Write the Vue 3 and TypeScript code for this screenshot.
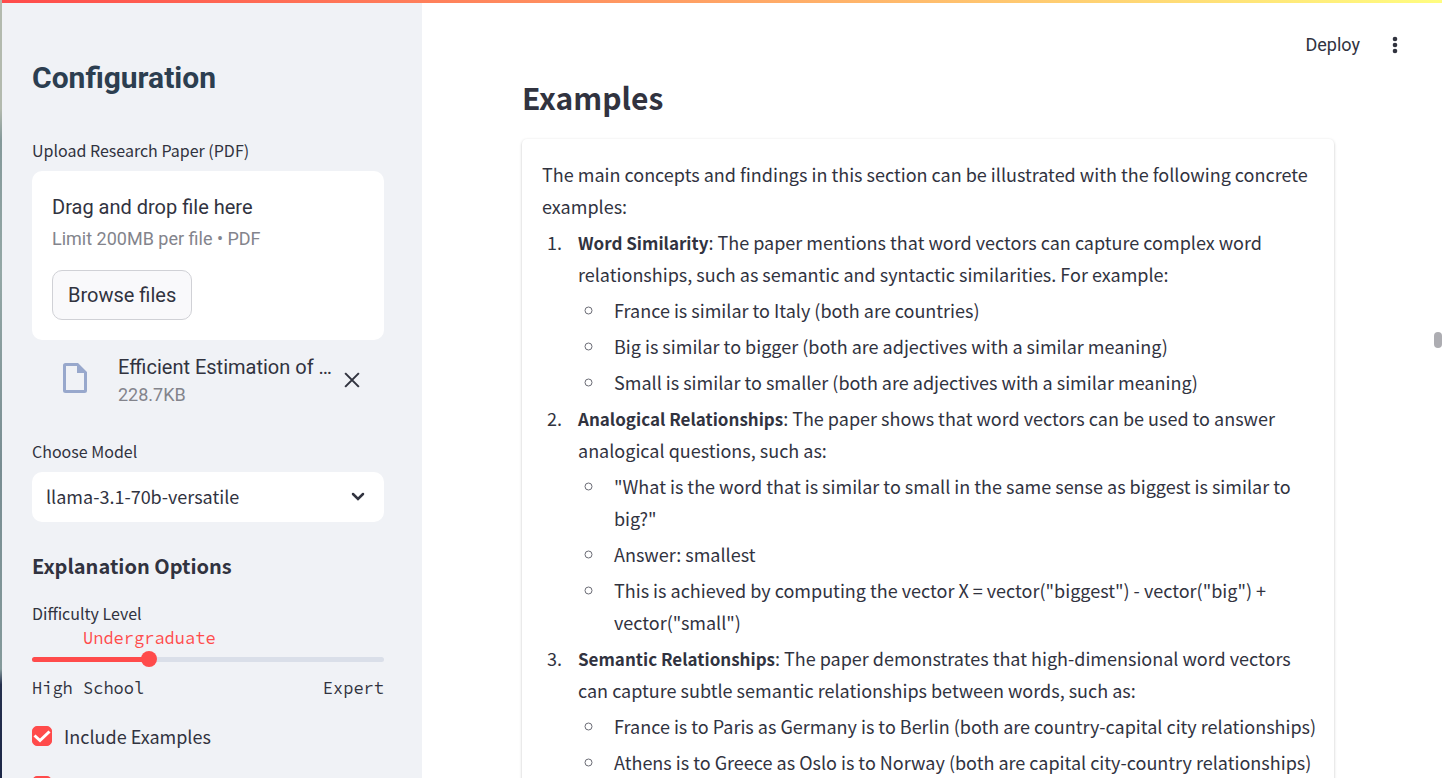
<script setup lang="ts">
import { computed, ref } from 'vue'

interface Example {
  title: string
  text: string
  points: string[]
}

const levels = ['High School', 'Undergraduate', 'Graduate', 'Expert']
const level = ref(1)
const levelPercent = computed(() => `${(level.value / (levels.length - 1)) * 100}%`)

const models = ['llama-3.1-70b-versatile']
const model = ref(models[0])

const includeExamples = ref(true)
const includeVisuals = ref(true)

const examples: Example[] = [
  {
    title: 'Word Similarity',
    text: 'The paper mentions that word vectors can capture complex word relationships, such as semantic and syntactic similarities. For example:',
    points: [
      'France is similar to Italy (both are countries)',
      'Big is similar to bigger (both are adjectives with a similar meaning)',
      'Small is similar to smaller (both are adjectives with a similar meaning)',
    ],
  },
  {
    title: 'Analogical Relationships',
    text: 'The paper shows that word vectors can be used to answer analogical questions, such as:',
    points: [
      '"What is the word that is similar to small in the same sense as biggest is similar to big?"',
      'Answer: smallest',
      'This is achieved by computing the vector X = vector("biggest") - vector("big") + vector("small")',
    ],
  },
  {
    title: 'Semantic Relationships',
    text: 'The paper demonstrates that high-dimensional word vectors can capture subtle semantic relationships between words, such as:',
    points: [
      'France is to Paris as Germany is to Berlin (both are country-capital city relationships)',
      'Athens is to Greece as Oslo is to Norway (both are capital city-country relationships)',
    ],
  },
]
</script>

<template>
  <div class="app">
    <div class="edge"></div>
    <aside class="sidebar">
      <h1 class="title">Configuration</h1>

      <section class="upload">
        <label class="label" for="browse">Upload Research Paper (PDF)</label>
        <div class="dropzone">
          <span class="drop-main">Drag and drop file here</span>
          <span class="drop-hint">Limit 200MB per file • PDF</span>
          <button id="browse" class="browse" type="button">Browse files</button>
        </div>
        <div class="file">
          <svg class="file-icon" viewBox="0 0 24 30" aria-hidden="true">
            <path
              fill-rule="evenodd"
              d="M2.5 0H15L24 9V27.5a2.5 2.5 0 0 1-2.5 2.5H2.5a2.5 2.5 0 0 1-2.5-2.5V2.5a2.5 2.5 0 0 1 2.5-2.5ZM3 3V27H21V10H14V3Z"
            />
          </svg>
          <div class="file-info">
            <span class="file-name">Efficient Estimation of …</span>
            <span class="file-size">228.7KB</span>
          </div>
          <button class="remove" type="button" aria-label="Remove file">
            <svg viewBox="0 0 14 14" aria-hidden="true"><path d="M1 1L13 13M13 1L1 13" /></svg>
          </button>
        </div>
      </section>

      <section class="model">
        <label class="label" for="model">Choose Model</label>
        <div class="select-wrap">
          <select id="model" v-model="model">
            <option v-for="m in models" :key="m" :value="m">{{ m }}</option>
          </select>
          <svg class="chevron" viewBox="0 0 14 10" aria-hidden="true"><path d="M2 2L7 7L12 2" /></svg>
        </div>
      </section>

      <h2 class="subtitle">Explanation Options</h2>

      <section class="difficulty">
        <label class="label" for="level">Difficulty Level</label>
        <div class="value-row">
          <output class="value" for="level" :style="{ left: levelPercent }">{{ levels[level] }}</output>
        </div>
        <div class="slider">
          <div class="track"><div class="fill" :style="{ width: levelPercent }"></div></div>
          <input id="level" v-model.number="level" type="range" min="0" :max="levels.length - 1" step="1" />
        </div>
        <div class="ticks">
          <span>{{ levels[0] }}</span>
          <span>{{ levels[levels.length - 1] }}</span>
        </div>
      </section>

      <div class="checks">
        <label class="check">
          <span class="box">
            <input v-model="includeExamples" type="checkbox" />
            <svg viewBox="0 0 20 20" aria-hidden="true"><path d="M2.5 9.5L8 14.5L17.5 5.5" /></svg>
          </span>
          <span>Include Examples</span>
        </label>
        <label class="check">
          <span class="box">
            <input v-model="includeVisuals" type="checkbox" aria-label="Include Visualizations" />
            <svg viewBox="0 0 20 20" aria-hidden="true"><path d="M2.5 9.5L8 14.5L17.5 5.5" /></svg>
          </span>
        </label>
      </div>
    </aside>

    <main class="main">
      <header class="toolbar">
        <button class="deploy" type="button">Deploy</button>
        <button class="menu" type="button" aria-label="Main menu">
          <svg viewBox="0 0 6 18" aria-hidden="true">
            <circle cx="3" cy="3" r="2.3" />
            <circle cx="3" cy="9" r="2.3" />
            <circle cx="3" cy="15" r="2.3" />
          </svg>
        </button>
      </header>
      <div class="content">
        <h2 class="heading">Examples</h2>
        <article class="card">
          <p>The main concepts and findings in this section can be illustrated with the following concrete examples:</p>
          <ol>
            <li v-for="e in examples" :key="e.title">
              <strong>{{ e.title }}</strong>: {{ e.text }}
              <ul>
                <li v-for="p in e.points" :key="p">{{ p }}</li>
              </ul>
            </li>
          </ol>
        </article>
      </div>
    </main>
    <div class="scrollbar"><div class="thumb"></div></div>
    <div class="stripe"></div>
  </div>
</template>

<style>
html,
body {
  margin: 0;
  height: 100%;
  overflow: hidden;
}
</style>

<style scoped>
.app {
  --ink: #31333f;
  --red: #ff4b4b;
  --sans: "Source Sans Pro", "Noto Sans CJK SC", sans-serif;
  --roboto: Roboto, sans-serif;
  position: relative;
  display: flex;
  height: 100vh;
  overflow: hidden;
  background: #fff;
  color: var(--ink);
  font: 18px/32px var(--sans);
}

.app * {
  box-sizing: border-box;
}

.edge {
  flex: 0 0 2px;
  background: linear-gradient(#b3baae 0%, #b3baae 14%, #84999a 18%, #94a8a6 35%, #788d92 60%, #849a9b 86%, #25304e 88%, #1c2747 100%);
}

.stripe {
  position: absolute;
  inset: 0 0 auto 2px;
  height: 3px;
  background: linear-gradient(90deg, #ff4b4b, #fffd80);
}

button {
  padding: 0;
  border: 0;
  background: none;
  color: inherit;
  cursor: pointer;
}

h1,
h2,
p {
  margin: 0;
}

.sidebar {
  flex: 0 0 420px;
  min-width: 0;
  padding: 58px 38px 0 30px;
  background: #f0f2f6;
}

.title {
  margin-bottom: 40px;
  color: #2c3e50;
  font: 700 30px/40px var(--roboto);
}

.label {
  display: block;
  font-size: 16px;
  line-height: 24px;
}

.upload .label,
.model .label {
  margin-bottom: 9px;
}

.dropzone {
  display: flex;
  flex-direction: column;
  align-items: flex-start;
  padding: 20px;
  border-radius: 10px;
  background: #fff;
  font-family: var(--roboto);
}

.drop-main {
  font-size: 20px;
}

.drop-hint {
  margin-bottom: 15px;
  color: #83848c;
  font-size: 18px;
}

.browse {
  height: 50px;
  padding: 0 15px;
  border: 1px solid #d0d1d6;
  border-radius: 10px;
  background: #f9f9fb;
  font: 20px/32px var(--roboto);
}

.file {
  display: flex;
  align-items: center;
  height: 80px;
  padding: 0 24px 0 30px;
  font-family: var(--roboto);
}

.file-icon {
  width: 26px;
  height: 30px;
  margin: -4px 30px 0 0;
  flex: none;
  fill: #98a8cc;
}

.file-info {
  display: flex;
  flex: 1;
  flex-direction: column;
  min-width: 0;
  margin-right: 12px;
  padding-top: 2px;
  line-height: 28px;
}

.file-name {
  overflow: hidden;
  font-size: 20px;
  text-overflow: ellipsis;
  white-space: nowrap;
}

.file-size {
  color: #83848c;
  font-size: 18px;
}

.remove {
  width: 16px;
  height: 16px;
  line-height: 0;
}

.remove svg {
  width: 16px;
  height: 16px;
  fill: none;
  stroke: var(--ink);
  stroke-width: 1.8;
}

.model {
  margin-top: 19px;
}

.select-wrap {
  display: grid;
  align-items: center;
}

.select-wrap > * {
  grid-area: 1 / 1;
}

select {
  width: 100%;
  height: 50px;
  padding: 0 40px 2px 14px;
  border: 0;
  border-radius: 10px;
  appearance: none;
  background: #fff;
  color: inherit;
  font: 18px/32px var(--sans);
}

.chevron {
  justify-self: end;
  width: 14px;
  height: 10px;
  margin-right: 19px;
  fill: none;
  stroke: var(--ink);
  stroke-width: 2.5;
  stroke-linecap: round;
  pointer-events: none;
}

.subtitle {
  margin: 30px 0 21px;
  font-size: 20px;
  font-weight: 700;
  line-height: 28px;
}

.value-row {
  position: relative;
  height: 24px;
}

.value {
  position: absolute;
  transform: translateX(-50%);
  color: var(--red);
  font: 17px/26px "Source Code Pro", "Liberation Mono", monospace;
}

.slider {
  display: grid;
  align-items: center;
  height: 20px;
}

.slider > * {
  grid-area: 1 / 1;
}

.track {
  height: 5px;
  border-radius: 3px;
  background: #dadfe9;
}

.fill {
  height: 5px;
  border-radius: 3px;
  background: var(--red);
}

.slider input {
  height: 16px;
  margin: 0 -8px;
  appearance: none;
  background: none;
}

.slider input::-webkit-slider-thumb {
  width: 16px;
  height: 16px;
  border-radius: 50%;
  appearance: none;
  background: var(--red);
}

.ticks {
  display: flex;
  justify-content: space-between;
  margin-top: 7px;
  font: 17px/24px "Source Code Pro", "Liberation Mono", monospace;
}

.checks {
  display: flex;
  flex-direction: column;
  gap: 18px;
  margin-top: 20px;
}

.check {
  display: flex;
  align-items: center;
  gap: 12px;
  height: 32px;
}

.box {
  display: grid;
  width: 20px;
  height: 20px;
}

.box > * {
  grid-area: 1 / 1;
}

.box input {
  width: 20px;
  height: 20px;
  margin: 0;
  border: 1px solid #c5c8d2;
  border-radius: 5px;
  appearance: none;
}

.box input:checked {
  border-color: var(--red);
  background: var(--red);
}

.box svg {
  fill: none;
  stroke: #fff;
  stroke-width: 3;
  pointer-events: none;
}

.main {
  position: relative;
  flex: 1;
  min-width: 0;
}

.toolbar {
  position: absolute;
  top: 29px;
  right: 36px;
  display: flex;
  align-items: center;
  gap: 32px;
  height: 32px;
}

.deploy {
  font: 18px/32px var(--roboto);
}

.menu {
  width: 6px;
  height: 18px;
  line-height: 0;
}

.menu svg {
  width: 6px;
  height: 18px;
  fill: var(--ink);
}

.content {
  padding: 75px 100px 0;
}

.heading {
  margin-bottom: 20px;
  font-size: 30px;
  font-weight: 700;
  line-height: 44px;
}

.card {
  padding: 19px 16px 19px 20px;
  border-radius: 5px;
  box-shadow: 0 1px 3px rgba(0, 0, 0, 0.24);
}

ol,
ul {
  margin: 0;
  padding: 0;
}

ul {
  list-style: circle;
}

li {
  margin: 4px 0 0 24px;
  padding-left: 12px;
}

ul li {
  margin-left: 28px;
  padding-left: 8px;
}

ul li::marker {
  color: #6b6c75;
}

strong {
  font-size: 17px;
  font-weight: 700;
  line-height: 24px;
}

.scrollbar {
  flex: 0 0 8px;
  padding-top: 332px;
}

.thumb {
  height: 16px;
  border-radius: 4px;
  background: #adadb2;
}
</style>
